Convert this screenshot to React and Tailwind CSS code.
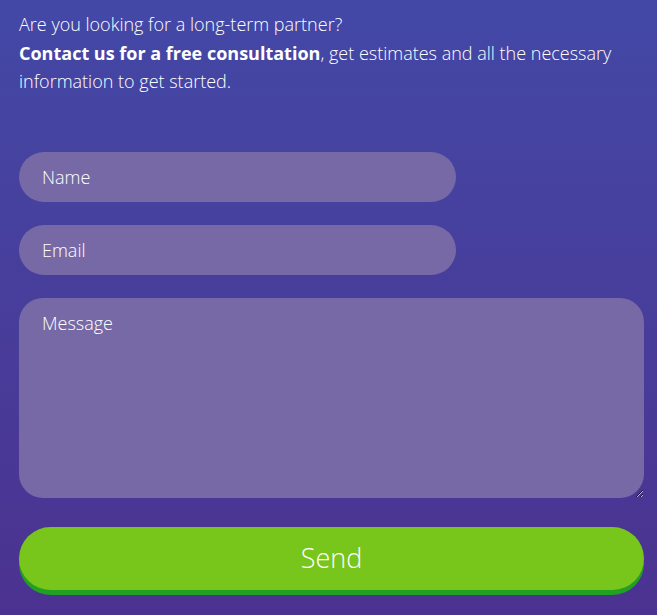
import React from 'react';

const ContactForm = () => {
    return (
        <div
            className="min-h-[615px] w-full bg-gradient-to-b from-[#4348a6] to-[#4b3290] pl-[19px] pr-[13px] pt-[10px] text-white"
            style={{ fontFamily: '"Open Sans", sans-serif' }}
        >
            <p className="text-[18px] leading-[28.5px] font-light">
                Are you looking for a long-term partner?
                <br />
                <strong className="font-bold">Contact us for a free consultation</strong>, get estimates and all the necessary information to get started.
            </p>

            <form className="mt-[56px] flex flex-col" onSubmit={(e) => e.preventDefault()}>
                <input
                    type="text"
                    placeholder="Name"
                    className="h-[50px] w-[437px] rounded-full bg-[#7769a6] px-[23px] text-[18px] font-light text-white placeholder:text-white outline-none"
                />
                <input
                    type="email"
                    placeholder="Email"
                    className="mt-[23px] h-[50px] w-[437px] rounded-full bg-[#7769a6] px-[23px] text-[18px] font-light text-white placeholder:text-white outline-none"
                />
                <textarea
                    placeholder="Message"
                    className="mt-[23px] h-[200px] w-full rounded-[24px] bg-[#7769a6] px-[23px] py-[12px] text-[18px] font-light text-white placeholder:text-white outline-none"
                />
                <button
                    type="submit"
                    className="mt-[29px] h-[63px] w-full rounded-full bg-[#78c51b] text-[27px] font-light text-white shadow-[0_5px_0_#22a024]"
                >
                    Send
                </button>
            </form>
        </div>
    );
};

export default function App() {
    return <ContactForm />;
}
